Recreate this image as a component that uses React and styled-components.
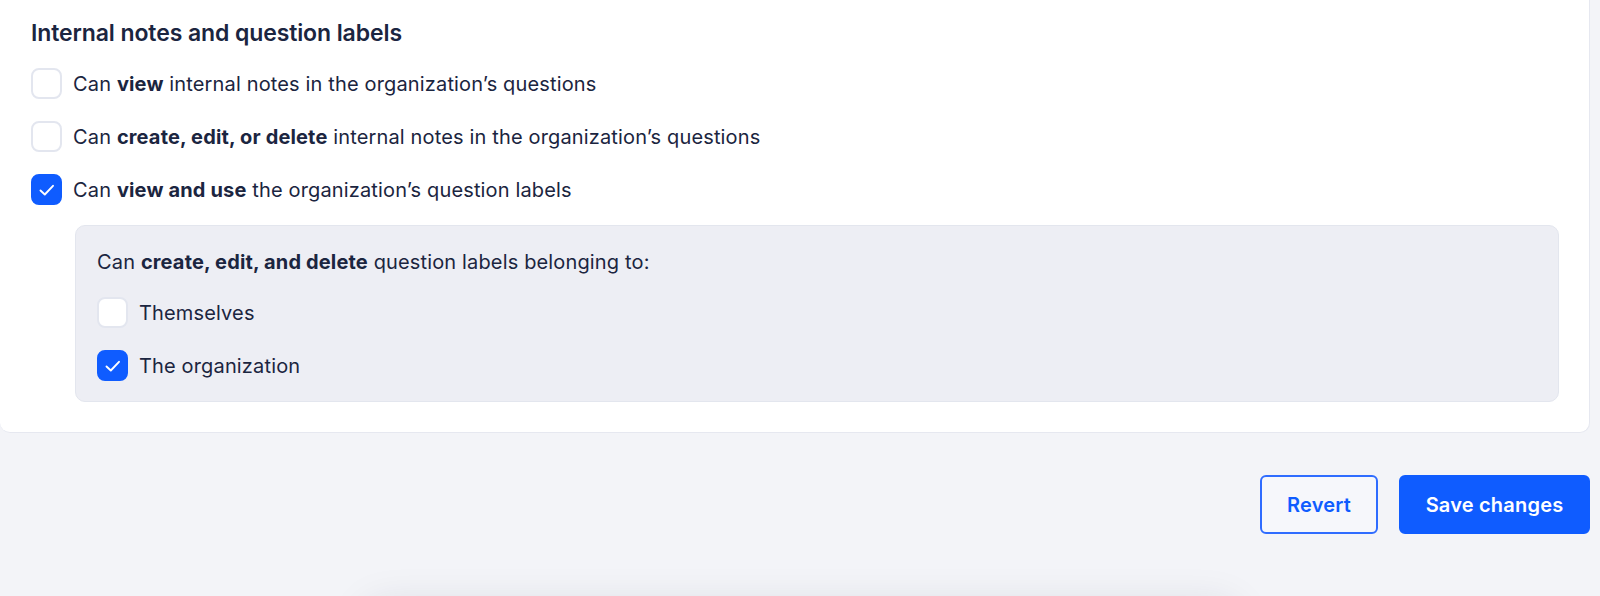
import React from 'react';
import styled, { createGlobalStyle } from 'styled-components';

const GlobalStyle = createGlobalStyle`
  html, body {
    margin: 0;
    padding: 0;
    background: #f3f4f8;
    overflow: hidden;
  }
  body {
    font-family: Inter, "Open Sans", sans-serif;
    color: #1b2540;
  }
`;

const Check = () => (
  <svg width="18" height="18" viewBox="0 0 18 18" fill="none">
    <polyline points="2.5,9.5 6.8,13.5 15,4.8" stroke="white" strokeWidth="1.9" strokeLinecap="round" strokeLinejoin="round" />
  </svg>
);

const Checkbox = ({ checked }) => (
  <Box $checked={checked}>{checked && <Check />}</Box>
);

const Option = ({ checked, children }) => (
  <Row>
    <Checkbox checked={checked} />
    <Label>{children}</Label>
  </Row>
);

const App = () => {
  return (
    <Page>
      <GlobalStyle />
      <Card>
        <Heading>Internal notes and question labels</Heading>
        <List>
          <Option>Can <b>view</b> internal notes in the organization’s questions</Option>
          <Option>Can <b>create, edit, or delete</b> internal notes in the organization’s questions</Option>
          <Option checked>Can <b>view and use</b> the organization’s question labels</Option>
        </List>
        <SubPanel>
          <Label>Can <b>create, edit, and delete</b> question labels belonging to:</Label>
          <List>
            <Option>Themselves</Option>
            <Option checked>The organization</Option>
          </List>
        </SubPanel>
      </Card>
      <Actions>
        <Button>Revert</Button>
        <Button $primary>Save changes</Button>
      </Actions>
      <Toast />
    </Page>
  );
};

const Page = styled.div`
  padding-right: 10px;
`;

const Card = styled.section`
  background: #fff;
  border-right: 1px solid #e6e8f0;
  border-bottom: 1px solid #e6e8f0;
  border-radius: 0 0 10px 10px;
  padding: 18px 30px 30px 31px;
`;

const Heading = styled.h3`
  margin: 0 0 20px;
  font-size: 23px;
  line-height: 30px;
  font-weight: 600;
  color: #1b2540;
  letter-spacing: -0.1px;
`;

const List = styled.div`
  display: flex;
  flex-direction: column;
  gap: 22px;
`;

const Row = styled.div`
  display: flex;
  align-items: center;
  gap: 11px;
`;

const Box = styled.span`
  flex: none;
  box-sizing: border-box;
  width: 31px;
  height: 31px;
  border-radius: 8px;
  display: flex;
  align-items: center;
  justify-content: center;
  background: ${p => (p.$checked ? '#0f5cff' : '#fff')};
  border: 2px solid ${p => (p.$checked ? '#0f5cff' : '#e3e6ef')};
`;

const Label = styled.span`
  font-size: 20px;
  line-height: 24px;
  letter-spacing: 0.15px;
  color: #1b2540;
  b {
    font-weight: 700;
  }
`;

const SubPanel = styled.div`
  margin: 20px 0 0 44px;
  background: #edeef4;
  border: 1px solid #e3e6ee;
  border-radius: 10px;
  padding: 24px 21px 20px;
  display: flex;
  flex-direction: column;
  gap: 23px;
`;

const Actions = styled.div`
  display: flex;
  justify-content: flex-end;
  gap: 21px;
  margin-top: 42px;
`;

const Button = styled.button`
  box-sizing: border-box;
  height: 59px;
  padding: 0 24px;
  min-width: ${p => (p.$primary ? '191px' : '118px')};
  border-radius: 6px;
  font-family: Inter, "Open Sans", sans-serif;
  font-size: 20px;
  font-weight: 600;
  letter-spacing: 0.2px;
  cursor: pointer;
  border: 2px solid ${p => (p.$primary ? '#0f5cff' : '#2f6cff')};
  background: ${p => (p.$primary ? '#0f5cff' : '#f6f7fb')};
  color: ${p => (p.$primary ? '#fff' : '#0f5cff')};
`;

const Toast = styled.div`
  margin: 72px auto 0 367px;
  width: 868px;
  height: 60px;
  border-radius: 14px;
  background: #f3f4f8;
  box-shadow: 0 0 40px rgba(30, 35, 60, 0.13);
`;

export default App;
